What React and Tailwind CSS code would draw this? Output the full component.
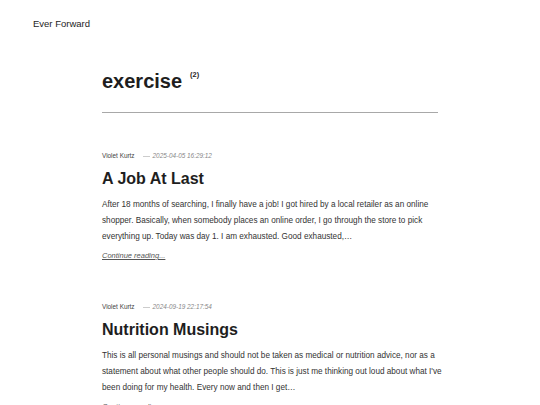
import React from 'react';

const posts = [
  {
    author: 'Violet Kurtz',
    date: '2025-04-05 16:29:12',
    title: 'A Job At Last',
    excerpt:
      'After 18 months of searching, I finally have a job! I got hired by a local retailer as an online shopper. Basically, when somebody places an online order, I go through the store to pick everything up. Today was day 1. I am exhausted. Good exhausted,…',
  },
  {
    author: 'Violet Kurtz',
    date: '2024-09-19 22:17:54',
    title: 'Nutrition Musings',
    excerpt:
      "This is all personal musings and should not be taken as medical or nutrition advice, nor as a statement about what other people should do. This is just me thinking out loud about what I've been doing for my health. Every now and then I get…",
  },
];

export default function App() {
  return (
    <div className="min-h-screen w-full bg-white text-[#1e1e1e]" style={{ fontFamily: '"Liberation Sans", Arial, sans-serif' }}>

      {/* Site header */}
      <header className="px-[33px] pt-[10px]">
        <a className="text-[9.5px] leading-[12px] text-[#1e1e1e]">Ever Forward</a>
      </header>

      <main className="w-[336px] ml-[102px] pt-[35px]">

        {/* Tag heading */}
        <h1 className="text-[20px] leading-[24px] font-bold text-[#1e1e1e]">
          exercise<sup className="ml-[8px] text-[7.4px] leading-none font-bold align-top relative top-[2px]">(2)</sup>
        </h1>

        <hr className="mt-[19px] border-0 border-t border-[#a8a8a8]" />

        {/* Posts */}
        <div className="pt-[39px] flex flex-col gap-[39px]">
          {posts.map((p) => (
            <article key={p.title}>
              <div className="flex items-center text-[6.4px] leading-[8px] text-[#444]">
                <span>{p.author}</span>
                <span className="ml-[8px] mr-[3px] w-[7px] border-t border-[#ccc]" />
                <span className="italic text-[#888]">{p.date}</span>
              </div>
              <h2 className="mt-[9px] text-[16px] leading-[20px] font-bold text-[#1e1e1e]">{p.title}</h2>
              <p className="mt-[8px] w-[350px] text-[8.2px] leading-[16px] text-[#333]">{p.excerpt}</p>
              <a className="block mt-[3px] text-[7.5px] leading-[16px] italic underline text-[#555]">Continue reading...</a>
            </article>
          ))}
        </div>
      </main>
    </div>
  );
}
